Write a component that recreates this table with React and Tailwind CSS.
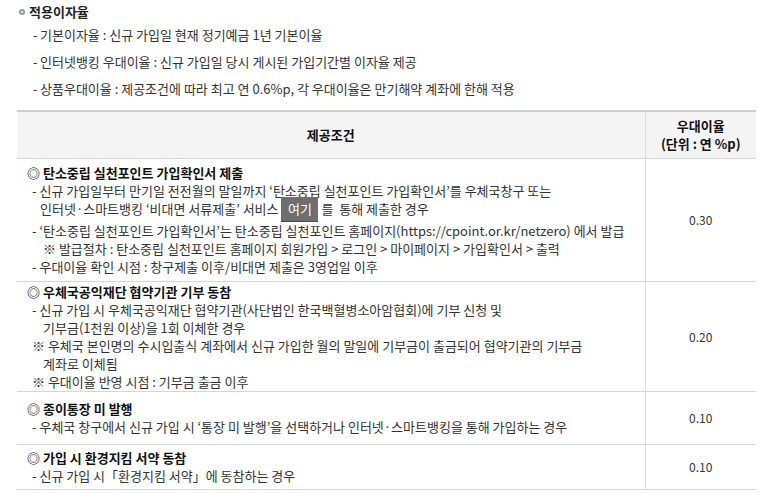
import React from 'react';

const font = { fontFamily: '"Noto Sans CJK KR", "Liberation Sans", sans-serif' };

const rateNotes = [
  '기본이자율 : 신규 가입일 현재 정기예금 1년 기본이율',
  '인터넷뱅킹 우대이율 : 신규 가입일 당시 게시된 가입기간별 이자율 제공',
  '상품우대이율 : 제공조건에 따라 최고 연 0.6%p, 각 우대이율은 만기해약 계좌에 한해 적용',
];

const Title = ({ children }) => (
  <div className="font-bold text-[#111]">◎ {children}</div>
);

const App = () => (
  <div className="w-[768px] h-[494px] bg-white text-[13px] text-[#333] overflow-hidden" style={font}>
    <div className="flex items-center gap-[4px] pl-[19px] pt-[3px] h-[21px] leading-[18px]">
      <span className="w-[6px] h-[6px] rounded-full bg-[#9a9a9a] flex items-center justify-center">
        <span className="w-[2px] h-[2px] rounded-full bg-white" />
      </span>
      <span className="font-bold text-[#222]">적용이자율</span>
    </div>

    <ul className="pl-[33px] mb-[8px]">
      {rateNotes.map((t) => (
        <li key={t} className="flex leading-[27px]">
          <span className="w-[7px]">-</span>
          <span>{t}</span>
        </li>
      ))}
    </ul>

    <table className="ml-[17px] w-[739px] border-collapse border-t-2 border-[#cfcfcf]">
      <thead>
        <tr className="bg-[#f4f4f4] border-b border-[#d6d6d6]">
          <th className="w-[628px] h-[47px] font-bold text-[#111] text-center border-r border-[#dcdcdc]">제공조건</th>
          <th className="font-bold text-[#111] text-center leading-[18px]">
            <div>우대이율</div>
            <div>(단위 : 연 %p)</div>
          </th>
        </tr>
      </thead>
      <tbody>
        <tr className="border-b border-[#d6d6d6]">
          <td className="pl-[10px] pt-[5px] pb-[5px] leading-[18px] border-r border-[#dcdcdc] align-top">
            <Title>탄소중립 실천포인트 가입확인서 제출</Title>
            <div className="pl-[5px]">- 신규 가입일부터 만기일 전전월의 말일까지 ‘탄소중립 실천포인트 가입확인서’를 우체국창구 또는</div>
            <div className="pl-[13px]">
              인터넷·스마트뱅킹 ‘비대면 서류제출’ 서비스{' '}
              <span className="inline-block align-middle -my-[4px] h-[25px] w-[37px] leading-[24px] text-center text-white bg-[#6e6e6e] border-b border-[#4e4e4e]">여기</span>
              {' '}를&nbsp; 통해 제출한 경우
            </div>
            <div className="pl-[5px] mt-[4px]">- ‘탄소중립 실천포인트 가입확인서’는 탄소중립 실천포인트 홈페이지(https://cpoint.or.kr/netzero) 에서 발급</div>
            <div className="pl-[16px]">※ 발급절차 : 탄소중립 실천포인트 홈페이지 회원가입 &gt; 로그인 &gt; 마이페이지 &gt; 가입확인서 &gt; 출력</div>
            <div className="pl-[5px]">- 우대이율 확인 시점 : 창구제출 이후/비대면 제출은 3영업일 이후</div>
          </td>
          <td className="text-center align-middle text-[12px]">0.30</td>
        </tr>
        <tr className="border-b border-[#d6d6d6]">
          <td className="pl-[10px] pt-[1px] pb-0 leading-[18px] border-r border-[#dcdcdc] align-top">
            <Title>우체국공익재단 협약기관 기부 동참</Title>
            <div className="pl-[5px]">- 신규 가입 시 우체국공익재단 협약기관(사단법인 한국백혈병소아암협회)에 기부 신청 및</div>
            <div className="pl-[16px]">기부금(1천원 이상)을 1회 이체한 경우</div>
            <div className="pl-[5px]">※ 우체국 본인명의 수시입출식 계좌에서 신규 가입한 월의 말일에 기부금이 출금되어 협약기관의 기부금</div>
            <div className="pl-[16px]">계좌로 이체됨</div>
            <div className="pl-[5px]">※ 우대이율 반영 시점 : 기부금 출금 이후</div>
          </td>
          <td className="text-center align-middle text-[12px]">0.20</td>
        </tr>
        <tr className="border-b border-[#d6d6d6]">
          <td className="pl-[10px] py-[8px] leading-[18px] border-r border-[#dcdcdc] align-top">
            <Title>종이통장 미 발행</Title>
            <div className="pl-[5px]">- 우체국 창구에서 신규 가입 시 ‘통장 미 발행’을 선택하거나 인터넷·스마트뱅킹을 통해 가입하는 경우</div>
          </td>
          <td className="text-center align-middle text-[12px]">0.10</td>
        </tr>
        <tr className="border-b border-[#d6d6d6]">
          <td className="pl-[10px] py-[4px] leading-[18px] border-r border-[#dcdcdc] align-top">
            <Title>가입 시 환경지킴 서약 동참</Title>
            <div className="pl-[5px]">- 신규 가입 시「환경지킴 서약」에 동참하는 경우</div>
          </td>
          <td className="text-center align-middle text-[12px]">0.10</td>
        </tr>
      </tbody>
    </table>
  </div>
);

export default App;
